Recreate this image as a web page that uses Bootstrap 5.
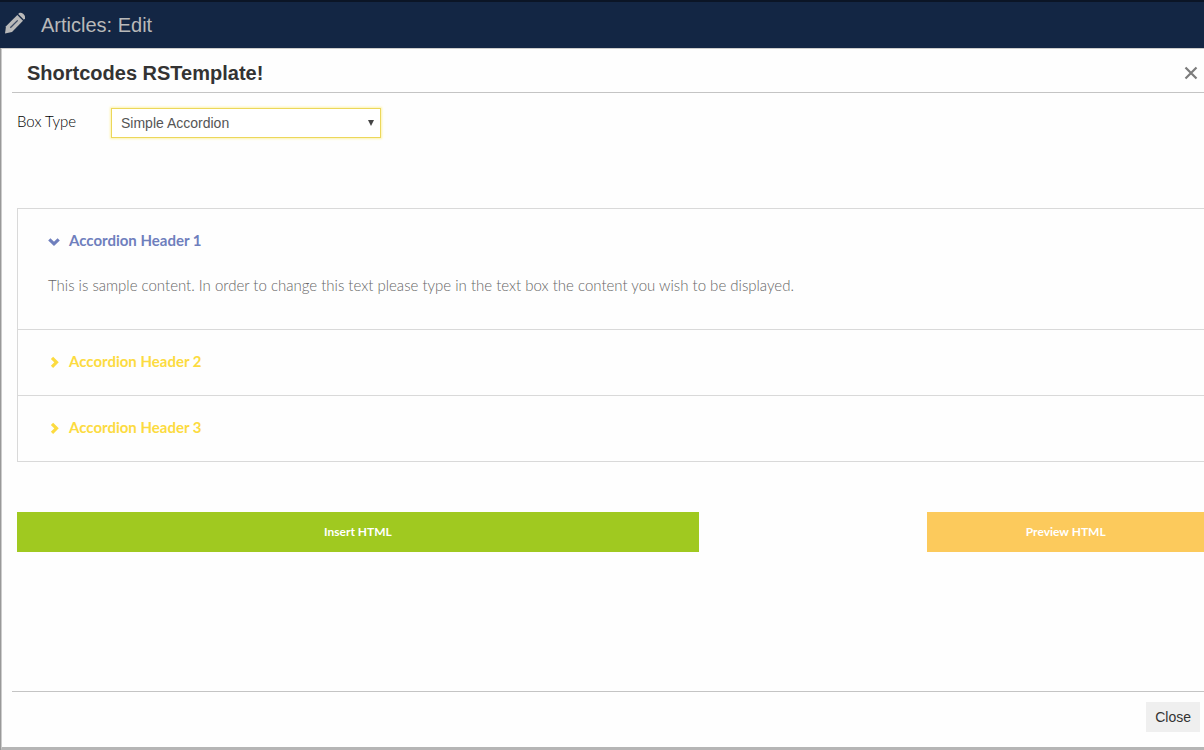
<!DOCTYPE html>
<html lang="en">
<head>
<meta charset="utf-8">
<meta name="viewport" content="width=device-width, initial-scale=1">
<title>Articles: Edit</title>
<link href="https://cdn.jsdelivr.net/npm/bootstrap@5.3.0/dist/css/bootstrap.min.css" rel="stylesheet">
<style>
  body { font-family: "Liberation Sans", Arial, sans-serif; font-size: 14px; line-height: 20px; color: #333; background: #999; }
  .page-bar { height: 48px; background: #132644; border-top: 2px solid #0b1526; color: #b9b9b9; }
  .page-bar h1 { font-size: 20px; line-height: 24px; font-weight: 400; }
  .dialog-panel { background: #fefefe; margin-left: 1px; border-left: 1px solid #ccc; border-top: 1px solid #ccc; border-bottom: 3px solid #b5b5b5; padding-left: 10px; }
  .dialog-head { height: 44px; padding: 4px 6px 0 15px; border-bottom: 1px solid #c4c4c4; }
  .dialog-head h2 { font-size: 20px; line-height: 28px; font-weight: 700; color: #333; }
  .dismiss { color: #7c7c7c; }
  .dialog-main { padding: 15px 0 0 5px; }
  .soft { font-family: Lato, "Open Sans", sans-serif; }
  .box-label { width: 94px; padding-top: 3px; font-size: 15px; font-weight: 300; color: #000; }
  .box-select { width: 270px; height: 30px; padding: 0 24px 0 9px; border: 1px solid #ecd75a; border-radius: 0; font-size: 14px; line-height: 20px; color: #555; box-shadow: 0 0 2px 1px #fdf3ae; background-image: url("data:image/svg+xml,%3Csvg xmlns='http://www.w3.org/2000/svg' viewBox='0 0 6 6'%3E%3Cpath d='M0 0h6L3 6z' fill='%23444'/%3E%3C/svg%3E"); background-size: 6px 6px; background-position: right 6px center; }
  .box-select:focus { border-color: #ecd75a; box-shadow: 0 0 2px 1px #fdf3ae; }
  .sections { margin-top: 70px; border: 1px solid #d9d9d9; border-right: 0; }
  .sections .accordion-item { background: transparent; border: 0; border-radius: 0; }
  .sections .accordion-item + .accordion-item { border-top: 1px solid #d9d9d9; }
  .sections .accordion-button { height: 65px; padding: 0 30px 3px; gap: 9px; font-size: 15px; line-height: 20px; font-weight: 700; color: #6f7fbd; background: transparent; box-shadow: none; border-radius: 0; }
  .sections .accordion-button.collapsed { color: #fcdb40; }
  .sections .accordion-button::after { display: none; }
  .sections .accordion-body { padding: 1px 30px 34px; font-size: 15px; line-height: 20px; font-weight: 300; color: #666; }
  .chevron-right { display: none; }
  .collapsed .chevron-right { display: inline; }
  .collapsed .chevron-down { display: none; }
  .actions { margin-top: 50px; }
  .action-btn { height: 40px; border: 0; border-radius: 0; font-size: 12px; line-height: 20px; font-weight: 700; color: #fff; }
  .insert { width: 57.45%; background: #a0c920; }
  .preview { width: 23.3%; background: #fcca5c; }
  .dialog-foot { padding: 10px 4px 15px 0; border-top: 1px solid #c4c4c4; }
  .close-btn { height: 30px; padding: 0 9px; border: 0; border-radius: 0; background: #efefef; font-size: 14px; line-height: 20px; color: #333; }
</style>
</head>
<body>
<div class="d-flex flex-column min-vh-100">
  <header class="page-bar d-flex align-items-center px-1">
    <svg class="me-3 mb-1" width="21" height="22" viewBox="0 0 21 22" aria-hidden="true">
      <path d="M1 21.500 2 14.300 13.300 3 19 8.700 8 20z" fill="#b9b9b9"/>
      <path d="m14.200 2.100 1-1c2.500-1.600 7.300 2.700 5.700 5.500l-1 1.200z" fill="#b9b9b9"/>
      <path d="m6.300 15.800 7.400-7.400" stroke="#3c4a62" stroke-width="1.300"/>
    </svg>
    <h1 class="m-0">Articles: Edit</h1>
  </header>

  <section class="dialog-panel d-flex flex-column flex-grow-1" role="dialog" aria-labelledby="dialog-title">
    <div class="dialog-head d-flex align-items-center justify-content-between">
      <h2 id="dialog-title" class="m-0">Shortcodes RSTemplate!</h2>
      <button type="button" class="dismiss btn border-0 p-0 d-flex" aria-label="Close dialog">
        <svg width="14" height="14" viewBox="0 0 14 14" aria-hidden="true"><path d="m1.500 1.500 11 11m0-11-11 11" stroke="currentColor" stroke-width="2.200"/></svg>
      </button>
    </div>

    <div class="dialog-main flex-grow-1">
      <div class="d-flex">
        <label for="box-type" class="box-label soft">Box Type</label>
        <select id="box-type" class="box-select form-select">
          <option selected>Simple Accordion</option>
        </select>
      </div>

      <div class="sections accordion soft" id="sample-accordion">
        <div class="accordion-item">
          <h3 class="accordion-header">
            <button class="accordion-button" type="button" data-bs-toggle="collapse" data-bs-target="#section-1" aria-expanded="true" aria-controls="section-1">
              <svg width="12" height="14" viewBox="0 0 12 14" fill="none" stroke="currentColor" stroke-width="3.200" aria-hidden="true"><path class="chevron-down" d="m1.300 6.300 4.700 4.500 4.700-4.500"/><path class="chevron-right" d="m4 3.800 4.500 4.500L4 12.800"/></svg>
              Accordion Header 1
            </button>
          </h3>
          <div id="section-1" class="accordion-collapse collapse show" data-bs-parent="#sample-accordion">
            <div class="accordion-body">This is sample content. In order to change this text please type in the text box the content you wish to be displayed.</div>
          </div>
        </div>
        <div class="accordion-item">
          <h3 class="accordion-header">
            <button class="accordion-button collapsed" type="button" data-bs-toggle="collapse" data-bs-target="#section-2" aria-expanded="false" aria-controls="section-2">
              <svg width="12" height="14" viewBox="0 0 12 14" fill="none" stroke="currentColor" stroke-width="3.200" aria-hidden="true"><path class="chevron-down" d="m1.300 6.300 4.700 4.500 4.700-4.500"/><path class="chevron-right" d="m4 3.800 4.500 4.500L4 12.800"/></svg>
              Accordion Header 2
            </button>
          </h3>
          <div id="section-2" class="accordion-collapse collapse" data-bs-parent="#sample-accordion"></div>
        </div>
        <div class="accordion-item">
          <h3 class="accordion-header">
            <button class="accordion-button collapsed" type="button" data-bs-toggle="collapse" data-bs-target="#section-3" aria-expanded="false" aria-controls="section-3">
              <svg width="12" height="14" viewBox="0 0 12 14" fill="none" stroke="currentColor" stroke-width="3.200" aria-hidden="true"><path class="chevron-down" d="m1.300 6.300 4.700 4.500 4.700-4.500"/><path class="chevron-right" d="m4 3.800 4.500 4.500L4 12.800"/></svg>
              Accordion Header 3
            </button>
          </h3>
          <div id="section-3" class="accordion-collapse collapse" data-bs-parent="#sample-accordion"></div>
        </div>
      </div>

      <div class="actions d-flex justify-content-between soft">
        <button type="button" class="action-btn insert btn">Insert HTML</button>
        <button type="button" class="action-btn preview btn">Preview HTML</button>
      </div>
    </div>

    <footer class="dialog-foot d-flex justify-content-end">
      <button type="button" class="close-btn btn">Close</button>
    </footer>
  </section>
</div>
<script src="https://cdn.jsdelivr.net/npm/bootstrap@5.3.0/dist/js/bootstrap.bundle.min.js"></script>
</body>
</html>
